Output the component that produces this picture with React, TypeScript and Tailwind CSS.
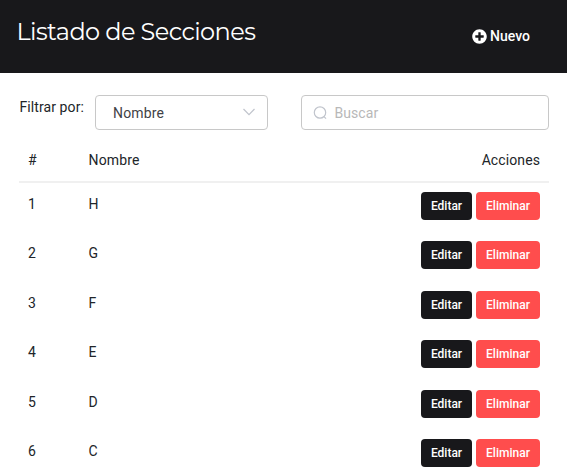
import React from 'react';

const rows = ['H', 'G', 'F', 'E', 'D', 'C'];

export default function App() {
  return (
    <div className="h-[475px] w-[567px] overflow-hidden bg-white font-[Roboto,sans-serif] text-[14px] text-[#212529]">
      <header className="flex h-[73px] justify-between bg-[#18181b] pl-[16.5px] pr-[37px] text-white">
        <h1 className="mt-[17px] font-[Montserrat,Lato,sans-serif] text-[24px] leading-[30px] tracking-[-0.57px]">Listado de Secciones</h1>
        <button className="mt-[26px] flex h-5 items-center gap-[3px] text-[14px] font-medium">
          <svg className="h-[15px] w-[15px]" viewBox="0 0 512 512" fill="currentColor">
            <path d="M256 8C119 8 8 119 8 256s111 248 248 248 248-111 248-248S393 8 256 8zm144 276c0 6.600-5.400 12-12 12h-92v92c0 6.600-5.400 12-12 12h-56c-6.600 0-12-5.400-12-12v-92h-92c-6.600 0-12-5.400-12-12v-56c0-6.600 5.400-12 12-12h92v-92c0-6.600 5.400-12 12-12h56c6.600 0 12 5.400 12 12v92h92c6.600 0 12 5.400 12 12v56z" />
          </svg>
          Nuevo
        </button>
      </header>
      <main className="pl-[19px] pr-[18px] pt-[22px]">
        <div className="flex h-[35px]">
          <span className="w-[76px] whitespace-nowrap pl-[0.4px] pt-[2px] leading-5 tracking-[0.1px]">Filtrar por:</span>
          <div className="flex h-[35px] w-[173px] items-center justify-between rounded border border-[#c8c8c8] pl-[17px] pr-[11px] text-[#3f4246]">
            <span className="pt-px tracking-[0.15px]">Nombre</span>
            <svg className="h-[14px] w-[14px]" viewBox="0 0 14 14" fill="none" stroke="#c0c4cc" strokeWidth="1.200"><path d="M1.500 3l5.500 5.700 5.500-5.700" /></svg>
          </div>
          <div className="ml-[33px] flex h-[35px] w-[248px] items-center gap-[7px] rounded border border-[#c8c8c8] pl-[10.5px] text-[#b8b8b8]">
            <svg className="h-[14px] w-[14px]" viewBox="0 0 14 14" fill="none" stroke="#c0c4cc" strokeWidth="1.200"><circle cx="7" cy="6.500" r="5.700" /><path d="M11 10.700l2 2" /></svg>
            <span className="pl-[0.9px] pt-px tracking-[0.1px]">Buscar</span>
          </div>
        </div>
        <table className="mt-[7.8px] w-full table-fixed border-separate border-spacing-0">
          <thead>
            <tr className="h-[45px]">
              <th className="w-[60px] border-b-2 border-[#f0f0f0] p-0 pl-[9px] pt-[2px] text-left font-normal">#</th>
              <th className="border-b-2 border-[#f0f0f0] p-0 pl-[9.5px] pt-[2px] text-left font-normal tracking-[0.15px]">Nombre</th>
              <th className="border-b-2 border-[#f0f0f0] p-0 pr-[9px] pt-[2px] text-right font-normal tracking-[0.1px]">Acciones</th>
            </tr>
          </thead>
          <tbody>
            {rows.map((r, i) => (
              <tr key={r} className="h-[49.5px] align-top">
                <td className="p-0 pl-[9px] pt-[11px] leading-5">{i + 1}</td>
                <td className="p-0 pl-[9.5px] pt-[11px] leading-5">{r}</td>
                <td className="p-0 pr-[9px] pt-[9px]">
                  <div className="flex justify-end gap-1 text-[12px] font-medium text-white">
                    <button className="h-7 w-[51px] rounded bg-[#18181b]">Editar</button>
                    <button className="h-7 w-[64px] rounded bg-[#ff4d4d]">Eliminar</button>
                  </div>
                </td>
              </tr>
            ))}
          </tbody>
        </table>
      </main>
    </div>
  );
}
